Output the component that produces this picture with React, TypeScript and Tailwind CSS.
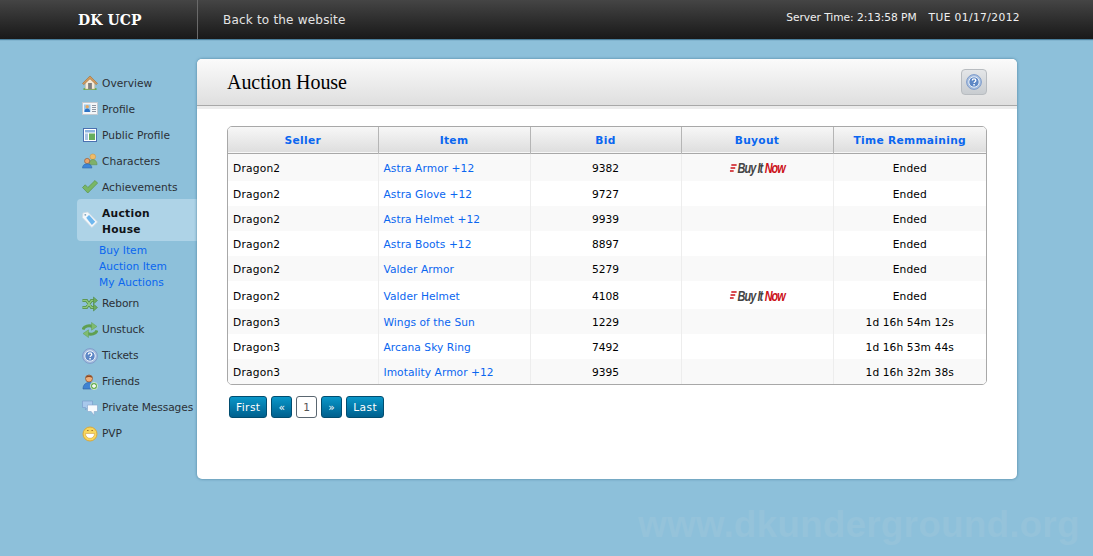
import React from "react";

const Home = () => (
  <svg width="17" height="16" viewBox="0 0 17 16">
    <path d="M1.500 13.500c2-1 12-1 14 0v2h-14z" fill="#69a94f" />
    <path d="M3.500 7.500v7h10v-7L8.500 2.500z" fill="#f4ead8" stroke="#bfae92" strokeWidth=".6" />
    <path d="M.5 8.500 8.500 .5l8 8-1.400 1.200L8.500 3.500 1.900 9.700z" fill="#d29c5e" stroke="#a5713a" strokeWidth=".7" />
    <rect x="6.500" y="8" width="4" height="6.500" fill="#7f7f7f" />
  </svg>
);
const Card = () => (
  <svg width="16" height="16" viewBox="0 0 16 16">
    <rect x=".5" y="1.500" width="15" height="12" fill="#f4f6f8" stroke="#c3c9d0" />
    <rect x="2" y="3.500" width="6.500" height="7.500" fill="#9ccbf0" />
    <circle cx="5.200" cy="5.800" r="1.700" fill="#e8a860" />
    <path d="M2.500 11c0-2.400 1.200-3.400 2.700-3.400S8 8.600 8 11z" fill="#2f73c4" />
    <path d="M10 4.500h4M10 6.500h4M10 8.500h4M10 10.500h4" stroke="#8d97a3" />
  </svg>
);
const Layout = () => (
  <svg width="16" height="16" viewBox="0 0 16 16">
    <rect x="1.500" y="1.500" width="13" height="13" fill="#fff" stroke="#4a70b0" />
    <rect x="3" y="3" width="10" height="2.500" fill="#8cb4e0" />
    <rect x="3" y="6.500" width="3" height="6.500" fill="#a9c4e4" />
    <rect x="7" y="6.500" width="6" height="6.500" fill="#67ae5c" />
  </svg>
);
const People = () => (
  <svg width="17" height="16" viewBox="0 0 17 16">
    <circle cx="11.500" cy="3.500" r="3" fill="#f0bc68" stroke="#cb8e3a" strokeWidth=".5" />
    <path d="M7.500 12c0-4 2-5.500 4-5.500s4.500 1.500 4.500 5.500z" fill="#7fb069" stroke="#5c8a48" strokeWidth=".5" />
    <circle cx="5.500" cy="8" r="2.800" fill="#e9a66c" stroke="#8a4a26" strokeWidth=".6" />
    <path d="M.5 15.500c0-3 2.200-4.500 5-4.500s5 1.500 5 4.500z" fill="#3d86d8" stroke="#2b5c9c" strokeWidth=".5" />
  </svg>
);
const Check = () => (
  <svg width="16" height="16" viewBox="0 0 16 16">
    <path d="M.5 8.500 3.200 5.800l2.700 2.700L13 1.500l2.600 2.600L5.800 14z" fill="#79b765" stroke="#5a9249" strokeWidth=".7" />
  </svg>
);
const Tag = () => (
  <svg width="17" height="18" viewBox="0 0 17 18">
    <path d="M.5 6.500 1 1.500 6 .5 16.500 11 10.500 17z" fill="#f4f8fb" stroke="#d0dae2" strokeWidth=".8" />
    <path d="M4.500 6.500 7.500 3.800l6.500 7-3.500 3.500z" fill="#6fb7ee" />
    <circle cx="3.500" cy="3.500" r="1" fill="#7fa4bc" />
  </svg>
);
const Shuffle = () => (
  <svg width="16" height="16" viewBox="0 0 16 16" fill="none">
    <path d="M.5 4.500h4l5 7H12M.5 11.500h4l5-7H12" stroke="#4f8a43" strokeWidth="3" />
    <path d="M.5 4.500h4l5 7H12M.5 11.500h4l5-7H12" stroke="#8cc77e" strokeWidth="1.400" />
    <path d="M11.500 1 15.500 4.500 11.500 8zM11.500 8 15.500 11.500 11.500 15z" fill="#6dac5e" stroke="#4f8a43" strokeWidth=".6" />
  </svg>
);
const Refresh = () => (
  <svg width="16" height="16" viewBox="0 0 16 16" fill="none">
    <path d="M1 7.500C2 4 7 3 10.500 4.500" stroke="#5f9f51" strokeWidth="3" />
    <path d="M9.500 .5 15 4.500 9.500 8.200z" fill="#80bb70" stroke="#5f9f51" strokeWidth=".5" />
    <path d="M15 8.500C14 12 9 13 5.500 11.500" stroke="#5f9f51" strokeWidth="3" />
    <path d="M6.500 7.800 1 11.500 6.500 15.500z" fill="#80bb70" stroke="#5f9f51" strokeWidth=".5" />
  </svg>
);
const Help = () => (
  <svg width="16" height="16" viewBox="0 0 16 16">
    <circle cx="8" cy="8" r="7.400" fill="#a9c0e0" stroke="#7f9ccb" />
    <circle cx="8" cy="8" r="5.200" fill="#5d87c6" stroke="#eaf0f8" strokeWidth="1" />
    <path d="M6.300 6.500C6.300 5.400 7 4.900 8 4.900s1.800.6 1.800 1.500c0 1.300-1.700 1.300-1.700 2.600" fill="none" stroke="#fff" strokeWidth="1.300" />
    <rect x="7.300" y="10" width="1.500" height="1.500" fill="#fff" />
  </svg>
);
const Friend = () => (
  <svg width="16" height="16" viewBox="0 0 16 16">
    <circle cx="7" cy="4.500" r="3.500" fill="#eeb07c" stroke="#8a4a26" strokeWidth=".7" />
    <path d="M3.500 3.800C4.200.6 9.800.6 10.500 3.800 8 2.800 6 2.800 3.500 3.800z" fill="#8a4a26" />
    <path d="M1 15c0-4 2.500-6.500 6-6.500s6 2.500 6 6.500z" fill="#3f83d2" stroke="#2b5c9c" strokeWidth=".6" />
    <circle cx="12" cy="12" r="3.700" fill="#6eb25c" stroke="#fff" strokeWidth=".6" />
    <path d="M12 10v4M10 12h4" stroke="#fff" strokeWidth="1.300" />
  </svg>
);
const Messages = () => (
  <svg width="16" height="16" viewBox="0 0 16 16">
    <path d="M.5 1h10v6.500H5.500L3.500 10V7.500h-3z" fill="#a8c8ec" stroke="#7c9ecb" strokeWidth=".7" />
    <path d="M5.500 5h10v6.500h-3.300V15.500l-3-4H5.500z" fill="#f8fafd" stroke="#8cabd0" strokeWidth=".7" />
  </svg>
);
const Smile = () => (
  <svg width="16" height="16" viewBox="0 0 16 16">
    <circle cx="8" cy="8" r="7" fill="#f8d65c" stroke="#d8a83c" />
    <path d="M5 4.500h1.600M9.400 4.500H11" stroke="#a8782c" />
    <path d="M3.500 7.500h9c0 3-2 4.800-4.500 4.800S3.500 10.500 3.500 7.500z" fill="#fff" stroke="#c89434" strokeWidth=".5" />
  </svg>
);

const navTop = [
  { label: "Overview", icon: <Home /> },
  { label: "Profile", icon: <Card /> },
  { label: "Public Profile", icon: <Layout /> },
  { label: "Characters", icon: <People /> },
  { label: "Achievements", icon: <Check /> },
];
const navBottom = [
  { label: "Reborn", icon: <Shuffle /> },
  { label: "Unstuck", icon: <Refresh /> },
  { label: "Tickets", icon: <Help /> },
  { label: "Friends", icon: <Friend /> },
  { label: "Private Messages", icon: <Messages /> },
  { label: "PVP", icon: <Smile /> },
];

const rows = [
  ["Dragon2", "Astra Armor +12", "9382", true, "Ended"],
  ["Dragon2", "Astra Glove +12", "9727", false, "Ended"],
  ["Dragon2", "Astra Helmet +12", "9939", false, "Ended"],
  ["Dragon2", "Astra Boots +12", "8897", false, "Ended"],
  ["Dragon2", "Valder Armor", "5279", false, "Ended"],
  ["Dragon2", "Valder Helmet", "4108", true, "Ended"],
  ["Dragon3", "Wings of the Sun", "1229", false, "1d 16h 54m 12s"],
  ["Dragon3", "Arcana Sky Ring", "7492", false, "1d 16h 53m 44s"],
  ["Dragon3", "Imotality Armor +12", "9395", false, "1d 16h 32m 38s"],
] as const;

const BuyItNow = () => (
  <span className="inline-flex items-center h-[16px] scale-x-[0.78] font-['Liberation_Sans',sans-serif] italic font-bold text-[14px] tracking-[-1.200px] leading-none">
    <svg width="9" height="9" viewBox="0 0 9 9" className="mr-[1px]">
      <path d="M2 1h7M1 4h6M0 7h5" stroke="#cc1018" strokeWidth="1.300" />
    </svg>
    <span className="text-[#444]">Buy It</span>
    <span className="text-[#cc1018] ml-[3px]">Now</span>
  </span>
);

const PageButton = ({ children }: { children: React.ReactNode }) => (
  <span className="h-[22px] px-[6px] pt-[2px] flex items-center rounded-[3px] border border-[#014d70] bg-gradient-to-b from-[#0a97c9] to-[#00608e] text-white">
    {children}
  </span>
);

const headers = ["Seller", "Item", "Bid", "Buyout", "Time Remmaining"];

export default function App() {
  return (
    <div className="relative w-[1093px] h-[556px] overflow-hidden bg-[#8dc0da] font-['DejaVu_Sans',sans-serif] text-[10.670px]">
      <header className="h-[39px] flex bg-gradient-to-b from-[#454545] to-[#191919] shadow-[0_1px_1px_#4a7f9c] text-white">
        <div className="w-[198px] pl-[78px] pt-[10px] border-r border-[#6a6a6a] font-['DejaVu_Serif',serif] font-bold text-[14px] leading-[20px] tracking-[0.1px]">
          DK UCP
        </div>
        <div className="pl-[25px] pt-[11px] text-[12px] leading-[18px] tracking-[0.2px] text-[#e4e4e4]">Back to the website</div>
        <div className="ml-auto mr-[73px] pt-[10px] leading-[16px] text-[#f0f0f0] flex gap-[12px]">
          <span className="tracking-[-0.05px]">Server Time: 2:13:58 PM</span>
          <span className="tracking-[0.4px]">TUE 01/17/2012</span>
        </div>
      </header>

      <div className="flex pt-[20px] pl-[77px]">
        <nav className="w-[120px] pt-[11px] text-[#2c3036]">
          {navTop.map((n) => (
            <div key={n.label} className="h-[26px] flex items-center pl-[5px] gap-[4px]">
              <span className="w-[16px] flex justify-center">{n.icon}</span>
              <span className="pt-[2px]">{n.label}</span>
            </div>
          ))}
          <div className="h-[42px] mt-[-1px] flex items-center bg-[#aed3e7] rounded-l-[4px] pl-[5px] gap-[4px] font-bold text-[#101216] tracking-[0.3px]">
            <span className="w-[16px] flex justify-center"><Tag /></span>
            <span className="leading-[16px] pt-[3px]">Auction<br />House</span>
          </div>
          <div className="pl-[22px] pt-[2px] text-[#0a66f0] leading-[16px]">
            <div>Buy Item</div>
            <div>Auction Item</div>
            <div>My Auctions</div>
          </div>
          {navBottom.map((n) => (
            <div key={n.label} className="h-[26px] flex items-center pl-[5px] gap-[4px] whitespace-nowrap">
              <span className="w-[16px] flex justify-center">{n.icon}</span>
              <span className="tracking-[-0.1px]">{n.label}</span>
            </div>
          ))}
        </nav>

        <main className="w-[820px] h-[420px] bg-white rounded-[5px] shadow-[0_0_3px_#4a7f9c]">
          <div className="h-[47px] flex items-center justify-between pl-[30px] pr-[30px] rounded-t-[5px] border-b border-[#a8a8a8] bg-gradient-to-b from-[#fbfbfb] to-[#dfdfdf]">
            <h1 className="font-['Liberation_Serif',serif] text-[20px] tracking-[-0.05px] text-black">Auction House</h1>
            <span className="w-[26px] h-[26px] flex items-center justify-center rounded-[4px] border border-[#b8bcc0] bg-gradient-to-b from-[#e4e6e8] to-[#c8ccd0]">
              <Help />
            </span>
          </div>
          <div className="h-[3px] bg-[#ececec]" />

          <div className="px-[30px] pt-[17px]">
            <div className="w-[760px] border border-[#a8a8a8] rounded-[5px] overflow-hidden">
              <table className="w-full table-fixed border-collapse text-black">
                <colgroup>
                  <col className="w-[150px]" />
                  <col className="w-[152px]" />
                  <col className="w-[151px]" />
                  <col className="w-[152px]" />
                  <col />
                </colgroup>
                <thead>
                  <tr className="h-[26px] bg-gradient-to-b from-[#f7f7f7] to-[#dedede] border-b border-[#a8a8a8]">
                    {headers.map((h, i) => (
                      <th
                        key={h}
                        className={`p-0 pt-[2px] text-center font-bold text-[#0a66f0] tracking-[0.3px] ${i < 4 ? "border-r border-[#b5b5b5]" : ""}`}
                      >
                        {h}
                      </th>
                    ))}
                  </tr>
                </thead>
                <tbody>
                  {rows.map((r, i) => (
                    <tr key={i} className={`${r[3] ? "h-[28px]" : "h-[25px]"} ${i % 2 === 0 ? "bg-[#f9f9f9]" : "bg-white"}`}>
                      <td className="p-0 pt-[3px] pl-[5px] border-r border-[#ededed] tracking-[0.2px]">{r[0]}</td>
                      <td className="p-0 pt-[3px] pl-[5px] border-r border-[#ededed] text-[#0a66f0] tracking-[0.05px]">{r[1]}</td>
                      <td className="p-0 pt-[3px] text-center border-r border-[#ededed]">{r[2]}</td>
                      <td className="p-0 pt-[3px] text-center border-r border-[#ededed] align-middle">{r[3] ? <BuyItNow /> : null}</td>
                      <td className="p-0 pt-[3px] text-center tracking-[0.1px]">{r[4]}</td>
                    </tr>
                  ))}
                </tbody>
              </table>
            </div>

            <div className="flex gap-[4px] mt-[11px] ml-[2px] tracking-[0.4px]">
              <PageButton>First</PageButton>
              <PageButton>«</PageButton>
              <span className="h-[22px] w-[21px] pt-[2px] flex items-center justify-center rounded-[3px] border border-[#5a6670] bg-white text-[#555]">1</span>
              <PageButton>»</PageButton>
              <PageButton>Last</PageButton>
            </div>
          </div>
        </main>
      </div>

      <div className="absolute left-[638px] top-[502px] font-['Liberation_Sans',sans-serif] font-bold text-[37px] leading-[46px] text-[#95c3da] whitespace-nowrap tracking-[0.15px]">
        www.dkunderground.org
      </div>
    </div>
  );
}
